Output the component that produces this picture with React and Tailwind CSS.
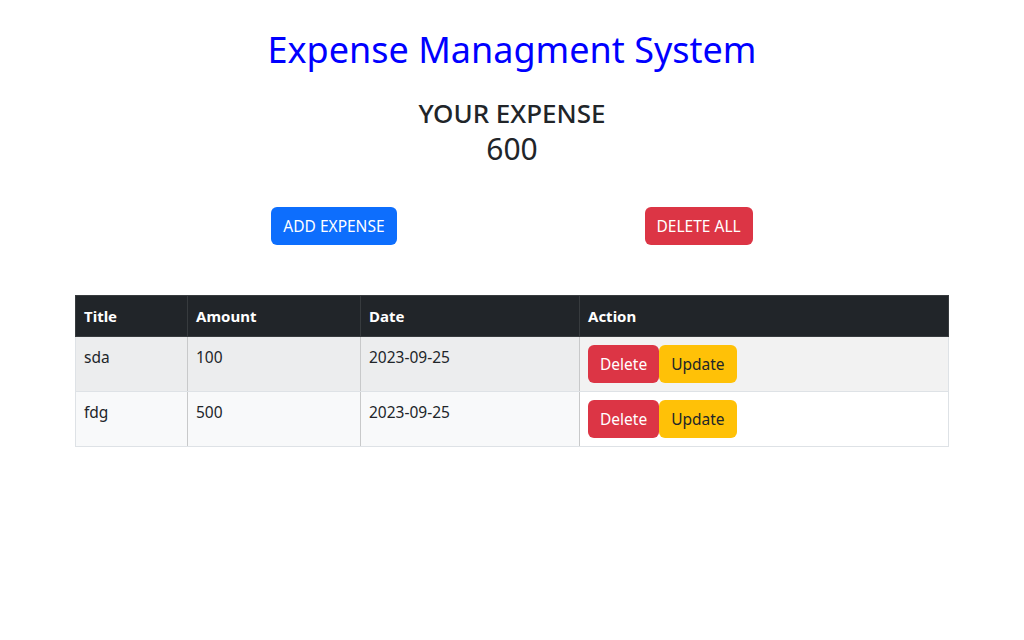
const expenses = [
  { title: 'sda', amount: 100, date: '2023-09-25' },
  { title: 'fdg', amount: 500, date: '2023-09-25' },
]

export default function App() {
  return (
    <div className="min-h-[640px] bg-white text-[#212529] font-['Noto_Sans',sans-serif]">
      <div className="flex flex-col items-center pt-[28px]">
        <h1 className="text-[36px] leading-[1.2] font-normal text-[#0000ff] mb-[24px]">
          Expense Managment System
        </h1>
        <h3 className="text-[26px] leading-[36px] font-medium">YOUR EXPENSE</h3>
        <h2 className="text-[30px] leading-[36px] font-normal">600</h2>
      </div>

      <div className="flex justify-center gap-[248px] mt-[40px]">
        <button className="h-[38px] px-[12px] rounded-[6px] bg-[#0d6efd] text-white text-[15.5px]">
          ADD EXPENSE
        </button>
        <button className="h-[38px] px-[12px] rounded-[6px] bg-[#dc3545] text-white text-[15.5px]">
          DELETE ALL
        </button>
      </div>

      <div className="px-[75px] mt-[50px]">
        <table className="w-full border-collapse text-[15.5px]">
          <thead>
            <tr className="bg-[#212529] text-white text-[15px]">
              <th className="w-[112px] text-left font-bold px-[8px] py-[8px] leading-[24px] border border-[#373b3e]">Title</th>
              <th className="w-[173px] text-left font-bold px-[8px] py-[8px] leading-[24px] border border-[#373b3e]">Amount</th>
              <th className="w-[219px] text-left font-bold px-[8px] py-[8px] leading-[24px] border border-[#373b3e]">Date</th>
              <th className="text-left font-bold px-[8px] py-[8px] leading-[24px] border border-[#373b3e]">Action</th>
            </tr>
          </thead>
          <tbody>
            {expenses.map((e, i) => {
              const light = i % 2 === 0 ? 'bg-[#ecedee]' : 'bg-[#f8f9fa]'
              const act = i % 2 === 0 ? 'bg-[#f2f2f2]' : 'bg-white'
              return (
                <tr key={i} className="align-top">
                  <td className={`${light} px-[8px] py-[8px] leading-[24px] border border-[#c8c9ca] border-t-[#dee2e6] border-b-[#dee2e6] border-l-[#dee2e6]`}>{e.title}</td>
                  <td className={`${light} px-[8px] py-[8px] leading-[24px] border border-[#c8c9ca] border-t-[#dee2e6] border-b-[#dee2e6]`}>{e.amount}</td>
                  <td className={`${light} px-[8px] py-[8px] leading-[24px] border border-[#c8c9ca] border-t-[#dee2e6] border-b-[#dee2e6]`}>{e.date}</td>
                  <td className={`${act} px-[8px] py-[8px] border border-[#dee2e6] border-l-[#c8c9ca]`}>
                    <div className="flex">
                      <button className="h-[38px] px-[12px] rounded-[6px] bg-[#dc3545] text-white">Delete</button>
                      <button className="h-[38px] px-[12px] rounded-[6px] bg-[#ffc107] text-[#212529]">Update</button>
                    </div>
                  </td>
                </tr>
              )
            })}
          </tbody>
        </table>
      </div>
    </div>
  )
}
